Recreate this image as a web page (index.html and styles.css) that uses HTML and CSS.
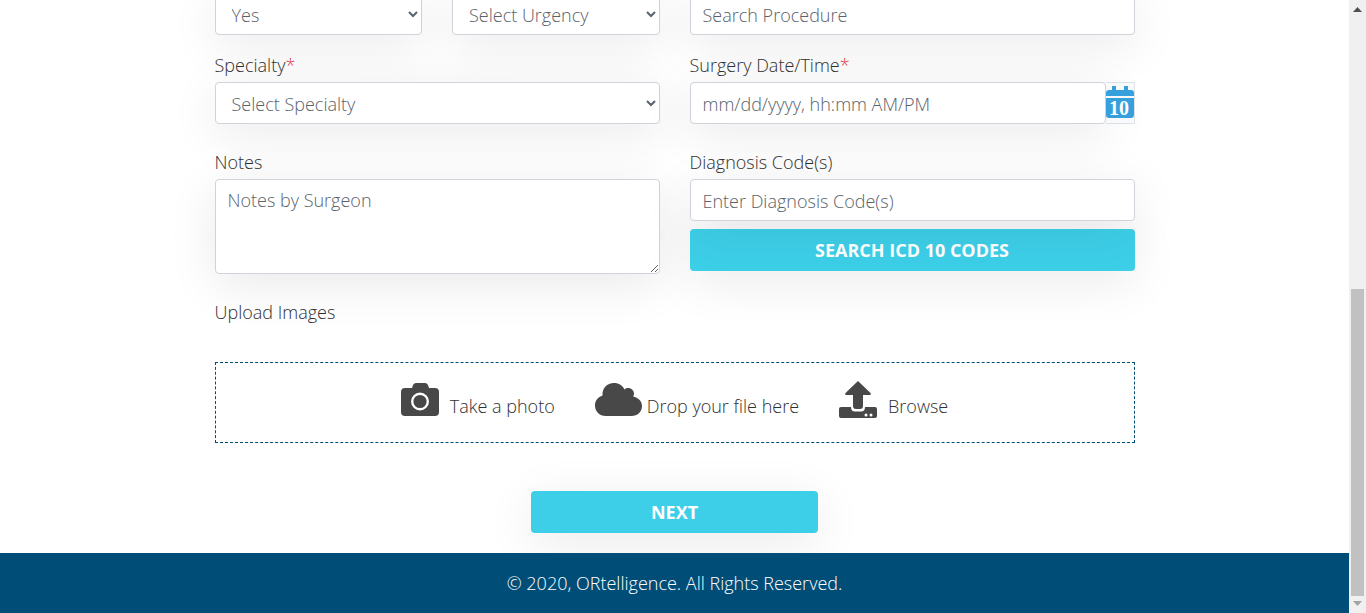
FILE: index.html
```html
<!DOCTYPE html>
<html lang="en">
<head>
<meta charset="utf-8">
<title>ORtelligence</title>
<link rel="stylesheet" href="styles.css">
</head>
<body>
<div class="page">
  <main>
    <form class="container">
      <div class="row">
        <div class="col pair">
          <select class="control" aria-label="Yes or no"><option>Yes</option><option>No</option></select>
          <select class="control" aria-label="Urgency"><option>Select Urgency</option></select>
        </div>
        <div class="col">
          <input class="control" type="text" placeholder="Search Procedure" aria-label="Procedure">
        </div>
      </div>
      <div class="row">
        <div class="col">
          <label for="specialty">Specialty<span class="required">*</span></label>
          <select class="control" id="specialty"><option>Select Specialty</option></select>
        </div>
        <div class="col">
          <label for="date">Surgery Date/Time<span class="required">*</span></label>
          <div class="date-group">
            <input class="control" id="date" type="text" placeholder="mm/dd/yyyy, hh:mm AM/PM">
            <button class="date-button" type="button" aria-label="Open calendar">
              <svg width="28" height="32" viewBox="0 0 28 32" aria-hidden="true">
                <path fill="#36a0dc" d="M0 10V7q0-3 3-3h3V0h4v4h8V0h4v4h3q3 0 3 3v3zM0 12h28v17q0 3-3 3H3q-3 0-3-3z"/>
                <text class="date-number" x="13" y="29" text-anchor="middle">10</text>
              </svg>
            </button>
          </div>
        </div>
      </div>
      <div class="row row-notes">
        <div class="col">
          <label for="notes">Notes</label>
          <textarea class="control notes" id="notes" placeholder="Notes by Surgeon"></textarea>
        </div>
        <div class="col">
          <label for="diagnosis">Diagnosis Code(s)</label>
          <input class="control raised" id="diagnosis" type="text" placeholder="Enter Diagnosis Code(s)">
          <button class="button search" type="button">SEARCH ICD 10 CODES</button>
        </div>
      </div>
      <div class="upload-title">Upload Images</div>
      <div class="dropzone">
        <button class="upload" type="button">
          <svg width="38" height="34" viewBox="0 0 38 34" aria-hidden="true">
            <path fill="#484848" d="M4 5h7l1-3q1-2 3-2h9q2 0 3 2l1 3h6q4 0 4 4v20q0 4-4 4H4q-4 0-4-4V9q0-4 4-4z"/>
            <circle cx="19" cy="18.500" r="7.800" fill="none" stroke="#fff" stroke-width="2.400"/>
          </svg>
          <span>Take a photo</span>
        </button>
        <div class="upload drop">
          <svg width="47" height="34" viewBox="0 0 47 34" aria-hidden="true">
            <path fill="#484848" d="M11 33C4 33 0 28 0 22.500 0 17.500 3 14 7.500 12.500 7 5 12 0 19 0c5 0 8.500 2.500 10.500 6.500C33 3 39.500 6 39 11.500l-.8 2C43 14.500 47 18 47 23c0 6-4.500 10-10.500 10z"/>
          </svg>
          <span>Drop your file here</span>
        </div>
        <button class="upload" type="button">
          <svg width="38" height="38" viewBox="0 0 38 38" aria-hidden="true">
            <path fill="#484848" d="M19 0l12.500 12q1 2-1 2H24v11q0 3-3 3h-4q-3 0-3-3V14H7.500q-2 0-1-2zM2 26h10q0 4.500 4 4.500h6q4 0 4-4.500h10q2 0 2 2v7q0 2-2 2H2q-2 0-2-2v-7q0-2 2-2z"/>
            <circle cx="27" cy="34" r="1.500" fill="#fff"/>
            <circle cx="32" cy="34" r="1.500" fill="#fff"/>
          </svg>
          <span>Browse</span>
        </button>
      </div>
      <button class="button next" type="submit">NEXT</button>
    </form>
  </main>
  <footer>© 2020, ORtelligence. All Rights Reserved.</footer>
</div>
<div class="scrollbar" aria-hidden="true">
  <svg width="9" height="5" viewBox="0 0 9 5"><path fill="#505050" d="M0 5L4.500 0 9 5z"/></svg>
  <div class="track"><div class="thumb"></div></div>
  <svg width="9" height="5" viewBox="0 0 9 5"><path fill="#a3a3a3" d="M0 0h9L4.500 5z"/></svg>
</div>
</body>
</html>
```
FILE: styles.css
```css
* {
  box-sizing: border-box;
}

body {
  display: flex;
  height: 100vh;
  margin: 0;
  overflow: hidden;
  background: #fff;
  color: #303030;
  font: 300 18px/27px "Open Sans", "Noto Sans", sans-serif;
}

/* The page is shown scrolled down to its end. */
.page {
  display: flex;
  flex: 1;
  flex-direction: column;
  justify-content: flex-end;
  min-width: 0;
  overflow: hidden;
}

.container {
  display: flex;
  flex-direction: column;
  max-width: 920px;
  margin: 0 auto;
  padding-bottom: 20px;
}

.row {
  display: grid;
  grid-template-columns: 1fr 1fr;
  gap: 30px;
  margin-bottom: 17px;
}

.row-notes {
  margin-top: 8px;
  margin-bottom: 25px;
}

.col {
  display: flex;
  flex-direction: column;
  min-width: 0;
}

.pair {
  display: grid;
  grid-template-columns: 1fr 1fr;
  gap: 30px;
}

label {
  margin-bottom: 3px;
}

.required {
  color: #dc3545;
}

.control {
  width: 100%;
  height: 42px;
  padding: 8px 12px 6px;
  border: 1px solid #ced4da;
  border-radius: 4px;
  background: #fff;
  box-shadow: 0 10px 50px rgba(0, 0, 0, 0.09);
  color: #5a626a;
  font: inherit;
}

.control::placeholder {
  color: #5a626a;
  opacity: 1;
}

.notes {
  display: block;
  height: 95px;
  padding-top: 7px;
}

.raised {
  position: relative;
}

.date-group {
  display: flex;
}

.date-group .control {
  flex: 1;
  min-width: 0;
}

.date-button {
  display: flex;
  align-items: flex-start;
  padding: 3px 0 0;
  border: 1px solid #dee2e6;
  border-left: 0;
  background: #f8f9fb;
}

.date-number {
  fill: #fff;
  font: bold 20px "Liberation Serif", serif;
}

.button {
  height: 42px;
  border: 0;
  border-radius: 4px;
  background: #3dcfe8;
  box-shadow: 0 10px 50px rgba(0, 0, 0, 0.09);
  color: #fff;
  font: inherit;
  font-weight: 700;
}

.search {
  margin-top: 8px;
}

.next {
  width: 287px;
  max-width: 100%;
  margin: 48px auto 0;
}

.dropzone {
  display: flex;
  flex-wrap: wrap;
  align-items: flex-end;
  justify-content: center;
  gap: 40px;
  margin-top: 36px;
  padding: 18px 0 22px;
  border: 1px dashed #004d78;
}

.upload {
  display: flex;
  align-items: flex-end;
  gap: 11px;
  height: 39px;
  padding: 0;
  border: 0;
  background: none;
  color: #303030;
  font: inherit;
}

.upload svg {
  flex: none;
  align-self: center;
  margin-bottom: 1px;
}

.drop {
  gap: 5px;
}

footer {
  padding: 17px 0 16px;
  background: #004d78;
  color: #fff;
  text-align: center;
  position: relative;
}

.scrollbar {
  display: flex;
  flex-direction: column;
  align-items: center;
  width: 17px;
  padding: 7px 0;
  background: #f0f0f0;
}

.track {
  display: flex;
  flex: 1;
  align-items: flex-end;
  width: 13px;
  padding: 5px 0;
}

.thumb {
  width: 100%;
  height: 53%;
  background: #c1c1c1;
}
```
